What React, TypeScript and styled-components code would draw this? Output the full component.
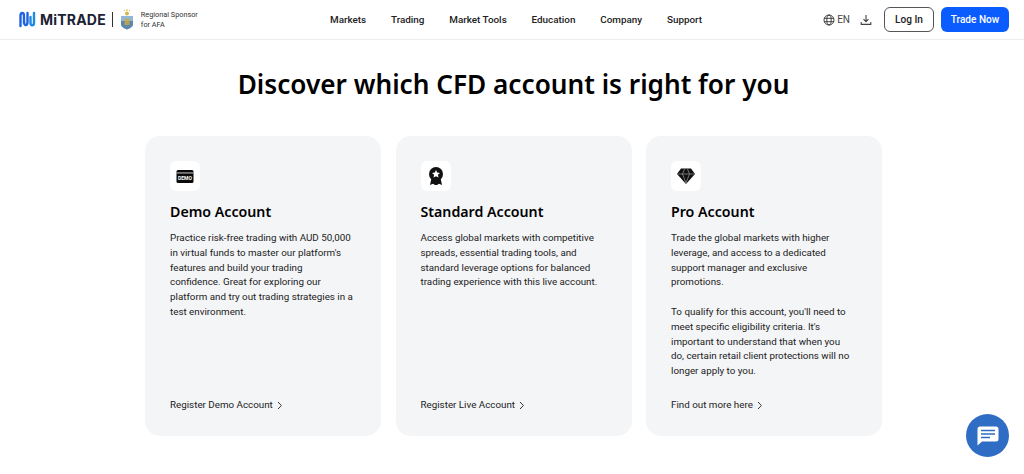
import styled, { createGlobalStyle } from 'styled-components';

const GlobalStyle = createGlobalStyle`
  html, body {
    margin: 0;
    padding: 0;
    background: #fff;
    font-family: Roboto, "Noto Sans", sans-serif;
    color: #111;
    overflow: hidden;
  }
  * { box-sizing: border-box; }
`;

const Page = styled.div`
  position: relative;
  width: 1024px;
  height: 474px;
  overflow: hidden;
`;

const Header = styled.header`
  height: 40px;
  border-bottom: 1px solid #ececec;
  display: flex;
  align-items: center;
  padding: 0 15px 0 19px;
`;

const Brand = styled.div`
  display: flex;
  align-items: center;
  width: 311px;
`;

const Wordmark = styled.span`
  font-family: "Inter", sans-serif;
  font-size: 14px;
  font-weight: 700;
  color: #1b2233;
  margin-left: 4px;
  letter-spacing: 0.2px;
`;

const Divider = styled.span`
  width: 1px;
  height: 15px;
  background: #333;
  margin: 0 7px 0 6px;
`;

const Sponsor = styled.span`
  font-size: 7.300px;
  line-height: 9.500px;
  color: #333;
  margin-left: 7px;
`;

const Nav = styled.nav`
  display: flex;
  gap: 24.800px;
  flex: 1;
`;

const NavItem = styled.a`
  font-size: 9.900px;
  font-weight: 500;
  color: #222;
`;

const Actions = styled.div`
  display: flex;
  align-items: center;
`;

const Lang = styled.span`
  display: flex;
  align-items: center;
  gap: 2px;
  font-size: 10px;
  color: #444;
  margin-right: 10px;
`;

const Button = styled.button<{ $primary?: boolean }>`
  height: 25px;
  border-radius: 6px;
  font-family: inherit;
  font-size: 10.100px;
  font-weight: 500;
  padding: 0;
  width: ${props => (props.$primary ? '68px' : '50px')};
  margin-left: ${props => (props.$primary ? '7px' : '12px')};
  color: ${props => (props.$primary ? '#fff' : '#222')};
  background: ${props => (props.$primary ? '#0a5cff' : '#fff')};
  border: ${props => (props.$primary ? 'none' : '1px solid #555')};
`;

const Main = styled.main`
  display: flex;
  flex-direction: column;
  align-items: center;
  padding-left: 3px;
`;

const Title = styled.h1`
  margin: 26px 0 34px;
  font-family: "Noto Sans", sans-serif;
  font-size: 26.200px;
  line-height: 36px;
  font-weight: 600;
  color: #000;
`;

const Cards = styled.div`
  display: grid;
  grid-template-columns: repeat(3, 236px);
  gap: 14.500px;
`;

const Card = styled.section`
  height: 300px;
  background: #f4f5f7;
  border-radius: 15px;
  padding: 25px 27px 24px 25px;
  display: flex;
  flex-direction: column;
`;

const IconBox = styled.div`
  width: 30px;
  height: 30px;
  flex-shrink: 0;
  background: #fff;
  border-radius: 6px;
  display: flex;
  align-items: center;
  justify-content: center;
`;

const CardTitle = styled.h2`
  margin: 11px 0 9px;
  font-family: "Noto Sans", sans-serif;
  font-size: 14.200px;
  line-height: 20px;
  font-weight: 600;
  color: #000;
`;

const Text = styled.p`
  margin: 0 0 14.800px;
  font-size: 9.800px;
  line-height: 14.800px;
  color: #222;
`;

const CardLink = styled.a`
  margin-top: auto;
  display: flex;
  align-items: center;
  gap: 3px;
  font-size: 9.800px;
  line-height: 14px;
  color: #222;
`;

const ChatBubble = styled.div`
  position: absolute;
  right: 15px;
  top: 414px;
  width: 43px;
  height: 43px;
  border-radius: 50%;
  background: #2f6cc4;
  display: flex;
  align-items: center;
  justify-content: center;
`;

const Logo = () => (
  <svg width="17" height="17" viewBox="0 0 17 17" fill="none" strokeWidth="2.400" strokeLinecap="round">
    <path d="M1.500 15V5c0-4 3.500-4 3.500 0v6.500" stroke="#1f63e0" />
    <path d="M8.500 2v9c0 4-3.500 4-3.500 0" stroke="#1f63e0" />
    <path d="M11.500 6v6c0 3 3.500 3 3.500 0V2" stroke="#1f8be0" />
  </svg>
);

const Crest = () => (
  <svg width="14" height="21" viewBox="0 0 14 21">
    <path d="M4 1h1v1H4zM6.500 0h1v2h-1zM9 1h1v1H9z" fill="#d9b648" />
    <circle cx="7" cy="4.500" r="2" fill="#d9b648" />
    <path d="M1 7h12v8c0 3-3 4-6 5.500C4 19 1 18 1 15z" fill="#8fb8d8" />
    <path d="M1 12h12v3c0 3-3 4-6 5.500C4 19 1 18 1 15z" fill="#5e86a8" />
    <path d="M4.500 9.500h5v6.500h-5z" fill="#caa84a" opacity="0.800" />
  </svg>
);

const Globe = () => (
  <svg width="12" height="12" viewBox="0 0 12 12" fill="none" stroke="#333" strokeWidth="0.900">
    <circle cx="6" cy="6" r="5" />
    <ellipse cx="6" cy="6" rx="2.200" ry="5" />
    <path d="M1 4.300h10M1 7.700h10" />
  </svg>
);

const DownloadIcon = () => (
  <svg width="12" height="12" viewBox="0 0 12 12" fill="none" stroke="#444" strokeWidth="1.100">
    <path d="M6 1v6.500M3.500 5.200 6 7.700l2.500-2.500M1.200 8v2.400h9.600V8" />
  </svg>
);

const DemoIcon = () => (
  <svg width="18" height="13" viewBox="0 0 18 13">
    <rect x="0.500" y="0" width="17" height="13" rx="1.500" fill="#0a0a0a" />
    <rect x="0.500" y="2.500" width="17" height="0.900" fill="#ddd" />
    <text x="9" y="10" textAnchor="middle" fontFamily="Roboto, sans-serif" fontSize="5" fontWeight="700" fill="#fff">
      DEMO
    </text>
  </svg>
);

const MedalIcon = () => (
  <svg width="16" height="19" viewBox="0 0 16 19">
    <path d="M3.500 11 2 18l3-1.200L7 18h2l2-1.200 3 1.200-1.500-7z" fill="#111" />
    <circle cx="8" cy="7" r="7" fill="#111" />
    <path d="m8 3 1.200 2.600 2.800.3-2.100 1.900.6 2.800L8 9.200l-2.500 1.400.6-2.800L4 5.900l2.800-.3z" fill="#fff" />
  </svg>
);

const DiamondIcon = () => (
  <svg width="18" height="16" viewBox="0 0 18 16">
    <path d="M4 0.500h10L18 6l-9 10L0 6z" fill="#111" />
    <path d="M0.800 6h16.400M5.500 6 9 15 12.500 6M5.500 6l2-5M12.500 6l-2-5" stroke="#999" strokeWidth="0.700" fill="none" />
  </svg>
);

const Chevron = () => (
  <svg width="7" height="9" viewBox="0 0 7 9" fill="none" stroke="#333" strokeWidth="1">
    <path d="m2 1 3.400 3.500L2 8" />
  </svg>
);

const ChatIcon = () => (
  <svg width="22" height="20" viewBox="0 0 22 20">
    <path d="M3 0.500h16A2.500 2.500 0 0 1 21.500 3v10a2.500 2.500 0 0 1-2.500 2.500H5L0.500 19.500V3A2.500 2.500 0 0 1 3 0.500z" fill="#fff" />
    <path d="M4 4.500h14M4 8h14M4 11.500h9" stroke="#2f6cc4" strokeWidth="1.700" />
  </svg>
);

const navItems = ['Markets', 'Trading', 'Market Tools', 'Education', 'Company', 'Support'];

const accounts = [
  {
    icon: <DemoIcon />,
    title: 'Demo Account',
    text: [
      "Practice risk-free trading with AUD 50,000 in virtual funds to master our platform's features and build your trading confidence. Great for exploring our platform and try out trading strategies in a test environment.",
    ],
    link: 'Register Demo Account',
  },
  {
    icon: <MedalIcon />,
    title: 'Standard Account',
    text: [
      'Access global markets with competitive spreads, essential trading tools, and standard leverage options for balanced trading experience with this live account.',
    ],
    link: 'Register Live Account',
  },
  {
    icon: <DiamondIcon />,
    title: 'Pro Account',
    text: [
      'Trade the global markets with higher leverage, and access to a dedicated support manager and exclusive promotions.',
      "To qualify for this account, you'll need to meet specific eligibility criteria. It's important to understand that when you do, certain retail client protections will no longer apply to you.",
    ],
    link: 'Find out more here',
  },
];

export default function App() {
  return (
    <Page>
      <GlobalStyle />
      <Header>
        <Brand>
          <Logo />
          <Wordmark>MiTRADE</Wordmark>
          <Divider />
          <Crest />
          <Sponsor>
            Regional Sponsor
            <br />
            for AFA
          </Sponsor>
        </Brand>
        <Nav>
          {navItems.map(item => (
            <NavItem key={item}>{item}</NavItem>
          ))}
        </Nav>
        <Actions>
          <Lang>
            <Globe />
            EN
          </Lang>
          <DownloadIcon />
          <Button>Log In</Button>
          <Button $primary>Trade Now</Button>
        </Actions>
      </Header>
      <Main>
        <Title>Discover which CFD account is right for you</Title>
        <Cards>
          {accounts.map(account => (
            <Card key={account.title}>
              <IconBox>{account.icon}</IconBox>
              <CardTitle>{account.title}</CardTitle>
              {account.text.map(paragraph => (
                <Text key={paragraph}>{paragraph}</Text>
              ))}
              <CardLink>
                {account.link}
                <Chevron />
              </CardLink>
            </Card>
          ))}
        </Cards>
      </Main>
      <ChatBubble>
        <ChatIcon />
      </ChatBubble>
    </Page>
  );
}
